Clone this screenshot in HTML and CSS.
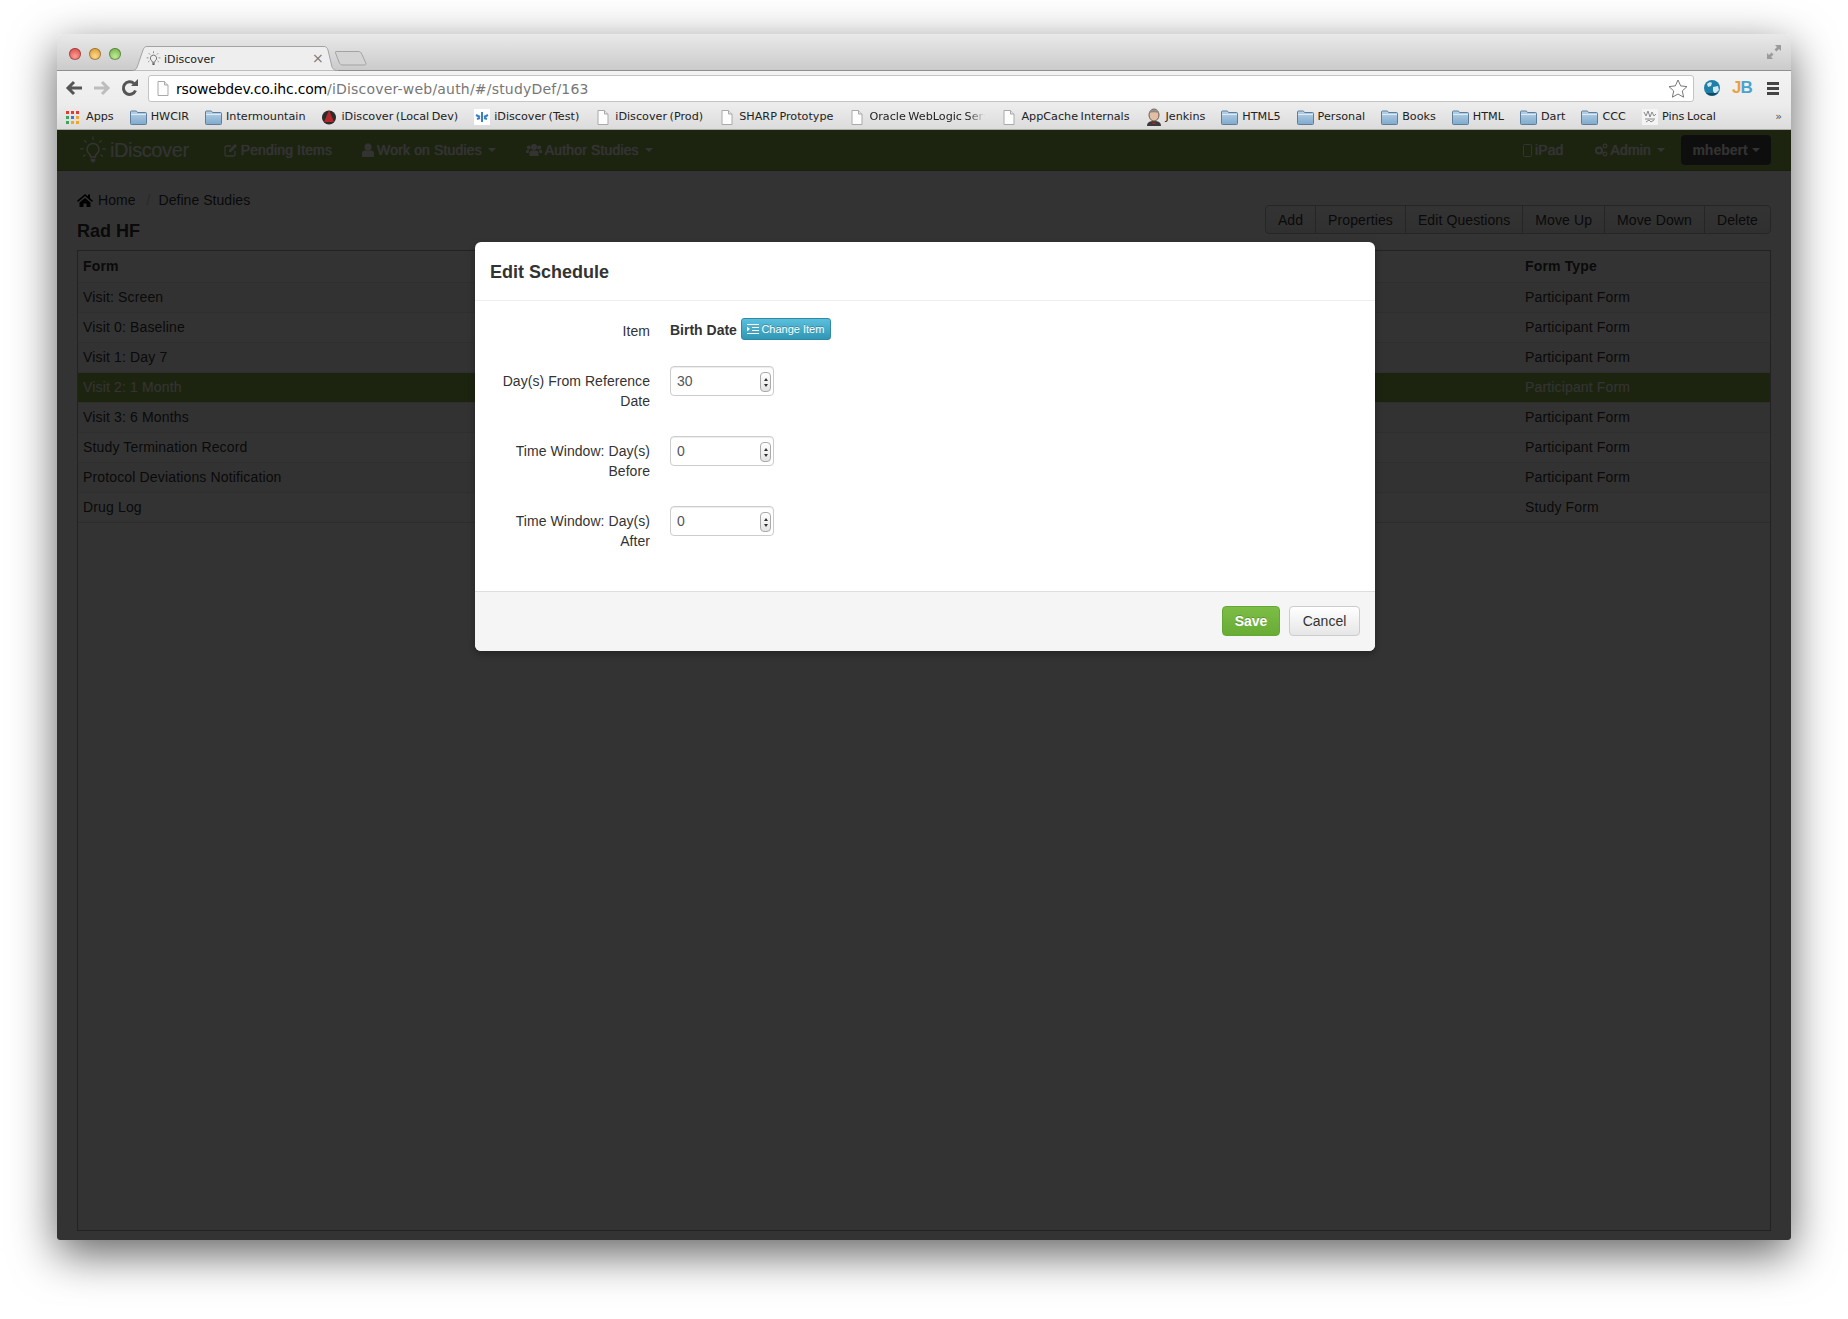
FILE: index.html
```html
<!DOCTYPE html>
<html>
<head>
    <title>iDiscover</title>
    <link rel="stylesheet" href="styles.css">
</head>
<body>
    <svg class="defs" width="0" height="0">
        <defs>
            <linearGradient id="folderFill" x1="0" y1="0" x2="0" y2="1">
                <stop offset="0" stop-color="#b9d3e8"/>
                <stop offset="1" stop-color="#7fa9cb"/>
            </linearGradient>
            <symbol id="folder" viewBox="0 0 17 15">
                <path d="M.5 13.500V2q0-1 1-1h4.500q.8 0 1.200 1l.3.500h8q1 0 1 1v10q0 1-1 1h-14q-1 0-1-1z" fill="url(#folderFill)" stroke="#5d7f9c"/>
                <path d="M1 4.500h15" stroke="#dcebf6"/>
            </symbol>
            <symbol id="page" viewBox="0 0 12 15">
                <path d="M1 .5h6.500L11 4v10.500H1z" fill="#fdfdfd" stroke="#a9a9a9"/>
                <path d="M7.500.5V4H11" fill="#e6e6e6" stroke="#a9a9a9"/>
            </symbol>
            <symbol id="bulb" viewBox="0 0 24 24">
                <path d="M12 6.500a5 5 0 0 0-3 9c.8.7 1 1.500 1 2.500h4c0-1 .2-1.800 1-2.500a5 5 0 0 0-3-9z" fill="none" stroke="currentColor" stroke-width="1.300"/>
                <path d="M10 19.500h4v1.500l-1 1.500h-2l-1-1.500z" fill="currentColor"/>
                <path d="M12 .5v3M4.500 3.500l2 2.200M19.500 3.500l-2 2.200M1 11h3M20 11h3M3.500 17.500l2-1.500M20.500 17.500l-2-1.500" stroke="currentColor" fill="none"/>
            </symbol>
        </defs>
    </svg>

    <div class="window">
        <!-- tab strip -->
        <div class="tabstrip">
            <div class="lights">
                <span class="light red"></span>
                <span class="light amber"></span>
                <span class="light green"></span>
            </div>
            <div class="tab">
                <svg class="tab-shape" width="206" height="25" viewBox="0 0 206 25">
                    <path d="M0 24.500c3 0 4-1 5-3L11 4c1-2.500 2-3.500 4-3.500h177c2 0 3 1 4 3.500l4 17c1 2 2 3.500 6 3.500" fill="#eeeeee" stroke="#a3a3a3"/>
                </svg>
                <svg class="tab-icon" width="15" height="15"><use href="#bulb"/></svg>
                <span class="tab-title">iDiscover</span>
                <span class="tab-close">×</span>
            </div>
            <svg class="newtab" width="33" height="16" viewBox="0 0 33 16">
                <path d="M2 1.500h22c2 0 3 .5 4 3l4 9c.3 1-.5 1.500-1.500 1.500H9c-2 0-3-.5-4-3L1.500 3c-.3-1 0-1.500.5-1.500z" fill="#d4d4d4" stroke="#a3a3a3"/>
            </svg>
            <svg class="expand" width="14" height="14" viewBox="0 0 14 14">
                <path d="M8 0h6v6l-2-2-2.500 2.500-2-2L10 2zM0 8l2 2 2.500-2.500 2 2L4 12l2 2H0z" fill="#9b9b9b"/>
            </svg>
        </div>

        <!-- address bar -->
        <div class="toolbar">
            <svg class="nav-arrow" width="18" height="16" viewBox="0 0 18 16"><path d="M17 8H4M9 2 3 8l6 6" fill="none" stroke="#555" stroke-width="3"/></svg>
            <svg class="nav-arrow" width="18" height="16" viewBox="0 0 18 16"><path d="M1 8h13M9 2l6 6-6 6" fill="none" stroke="#bdbdbd" stroke-width="3"/></svg>
            <svg class="nav-arrow" width="18" height="18" viewBox="0 0 18 18"><path d="M14.500 11.500A6.300 6.300 0 1 1 13 4.500" fill="none" stroke="#555" stroke-width="3"/><path d="M10 7h7V0z" fill="#555"/></svg>
            <div class="urlbar">
                <svg class="url-page" width="12" height="15"><use href="#page"/></svg>
                <span class="url"><span class="url-host">rsowebdev.co.ihc.com</span>/iDiscover-web/auth/#/studyDef/163</span>
                <svg class="star" width="20" height="19" viewBox="0 0 20 19"><path d="m10 1 2.700 5.900 6.300.7-4.700 4.300 1.300 6.300L10 15l-5.600 3.200 1.300-6.300L1 7.600l6.300-.7z" fill="#fff" stroke="#777"/></svg>
            </div>
            <svg class="ext-globe" width="16" height="16" viewBox="0 0 16 16"><circle cx="8" cy="8" r="8" fill="#1f7fa8"/><path d="M3 4c2-2 4-2 5-1L7 6 4 7zM9 7l5-1 1 4-4 4-2-3z" fill="#d4e6ee"/><path d="M2 13a8 8 0 0 0 12 0z" fill="#124a63"/></svg>
            <span class="ext-jb"><span class="ext-j">J</span><span class="ext-b">B</span></span>
            <div class="menu-icon"><i></i><i></i><i></i></div>
        </div>

        <!-- bookmarks -->
        <div class="bookmarks">
            <a class="bm bm-apps"><span class="apps-grid"><i class="r"></i><i class="r"></i><i class="r"></i><i class="g"></i><i class="b"></i><i class="o"></i><i class="g"></i><i class="o"></i><i class="o"></i></span>Apps</a>
            <a class="bm"><svg width="17" height="15"><use href="#folder"/></svg>HWCIR</a>
            <a class="bm"><svg width="17" height="15"><use href="#folder"/></svg>Intermountain</a>
            <a class="bm"><svg width="16" height="16" viewBox="0 0 16 16"><circle cx="8" cy="8.500" r="7" fill="#2b2b2b"/><path d="M8 1 13 13H3z" fill="#b3262a"/></svg>iDiscover (Local Dev)</a>
            <a class="bm"><svg width="16" height="16" viewBox="0 0 16 16"><rect width="16" height="16" fill="#fff"/><path d="M8 3v10M2 6l4 2M14 6l-4 2M3 10l3-1M13 10l-3-1" stroke="#3b7fc0" stroke-width="2"/></svg>iDiscover (Test)</a>
            <a class="bm"><svg width="16" height="15"><use href="#page"/></svg>iDiscover (Prod)</a>
            <a class="bm"><svg width="16" height="15"><use href="#page"/></svg>SHARP Prototype</a>
            <a class="bm bm-fade"><svg width="16" height="15"><use href="#page"/></svg><span class="bm-fade-text">Oracle WebLogic Server</span></a>
            <a class="bm"><svg width="16" height="15"><use href="#page"/></svg>AppCache Internals</a>
            <a class="bm"><svg width="16" height="18" viewBox="0 0 16 18"><path d="M1 18c0-4 3-5 7-5s7 1 7 5z" fill="#3a3a3a"/><ellipse cx="8" cy="7" rx="5" ry="6" fill="#e2bfa3" stroke="#6b5a50"/><path d="M3 5c1-4 9-4 10 0-3-1-7-1-10 0z" fill="#888"/><path d="M6.500 14 8 15l1.500-1v2.500L8 15.500l-1.500 1z" fill="#b0242a"/></svg>Jenkins</a>
            <a class="bm"><svg width="17" height="15"><use href="#folder"/></svg>HTML5</a>
            <a class="bm"><svg width="17" height="15"><use href="#folder"/></svg>Personal</a>
            <a class="bm"><svg width="17" height="15"><use href="#folder"/></svg>Books</a>
            <a class="bm"><svg width="17" height="15"><use href="#folder"/></svg>HTML</a>
            <a class="bm"><svg width="17" height="15"><use href="#folder"/></svg>Dart</a>
            <a class="bm"><svg width="17" height="15"><use href="#folder"/></svg>CCC</a>
            <a class="bm"><svg width="16" height="16" viewBox="0 0 16 16"><rect width="16" height="16" fill="#f4f4f4"/><path d="M2 3l2 4 2-5 2 6 2-5 2 4 2-2M3 10h10M4 13l3-2 2 2 3-2" stroke="#8a8a8a" fill="none"/></svg>Pins Local</a>
            <span class="bm-more">»</span>
        </div>

        <!-- the page itself -->
        <div class="app">
            <nav class="navbar">
                <a class="brand"><svg width="28" height="28"><use href="#bulb"/></svg>iDiscover</a>
                <a class="nav-link">
                    <svg width="14" height="14" viewBox="0 0 14 14"><path d="M11 8v3.500q0 1.500-1.500 1.500h-7Q1 13 1 11.500v-7Q1 3 2.500 3H7" fill="none" stroke="currentColor" stroke-width="1.300"/><path d="M5 7 11 1l2 2-6 6H5z" fill="currentColor"/></svg>
                    Pending Items
                </a>
                <a class="nav-link">
                    <svg width="12" height="14" viewBox="0 0 12 14"><circle cx="6" cy="4" r="3.500" fill="currentColor"/><path d="M0 13V10q0-2.500 3-2.500h6q3 0 3 2.500v3q0 1-1 1H1q-1 0-1-1z" fill="currentColor"/></svg>
                    Work on Studies <b class="caret"></b>
                </a>
                <a class="nav-link">
                    <svg width="16" height="14" viewBox="0 0 16 14"><circle cx="8" cy="4" r="3" fill="currentColor"/><circle cx="2.800" cy="4.500" r="2" fill="currentColor"/><circle cx="13.200" cy="4.500" r="2" fill="currentColor"/><path d="M3.500 13V10q0-2.500 2.500-2.500h4q2.500 0 2.500 2.500v3zM0 10V8q0-1 1-1h2L2.500 10zM16 10V8q0-1-1-1h-2l.5 3z" fill="currentColor"/></svg>
                    Author Studies <b class="caret"></b>
                </a>
                <div class="nav-right">
                    <a class="nav-link">
                        <svg width="9" height="13" viewBox="0 0 9 13"><rect x=".5" y=".5" width="8" height="12" rx="1" fill="none" stroke="currentColor"/></svg>
                        iPad
                    </a>
                    <a class="nav-link">
                        <svg width="14" height="14" viewBox="0 0 14 14"><circle cx="5" cy="7.500" r="3" fill="none" stroke="currentColor" stroke-width="2"/><circle cx="11" cy="3" r="1.800" fill="none" stroke="currentColor" stroke-width="1.300"/><circle cx="11" cy="11" r="1.800" fill="none" stroke="currentColor" stroke-width="1.300"/></svg>
                        Admin <b class="caret"></b>
                    </a>
                    <a class="user-btn">mhebert <b class="caret"></b></a>
                </div>
            </nav>

            <main class="content">
                <div class="breadcrumb">
                    <svg width="16" height="14" viewBox="0 0 16 14"><path d="M8 1 0 7.800l1 1.100 7-6 7 6 1-1.100-3-2.600V1.500h-2v2zM2.500 9.500 8 5l5.500 4.500V14H9.500v-3.500h-3V14h-4z" fill="currentColor"/></svg>
                    <a>Home</a><span class="divider">/</span><a>Define Studies</a>
                </div>
                <div class="title-row">
                    <h2>Rad HF</h2>
                    <div class="btn-group">
                        <button>Add</button>
                        <button>Properties</button>
                        <button>Edit Questions</button>
                        <button>Move Up</button>
                        <button>Move Down</button>
                        <button>Delete</button>
                    </div>
                </div>
                <div class="table-box">
                    <table>
                        <thead>
                            <tr><th>Form</th><th class="col-type">Form Type</th></tr>
                        </thead>
                        <tbody>
                            <tr><td>Visit: Screen</td><td>Participant Form</td></tr>
                            <tr><td>Visit 0: Baseline</td><td>Participant Form</td></tr>
                            <tr><td>Visit 1: Day 7</td><td>Participant Form</td></tr>
                            <tr class="selected"><td>Visit 2: 1 Month</td><td>Participant Form</td></tr>
                            <tr><td>Visit 3: 6 Months</td><td>Participant Form</td></tr>
                            <tr><td>Study Termination Record</td><td>Participant Form</td></tr>
                            <tr><td>Protocol Deviations Notification</td><td>Participant Form</td></tr>
                            <tr><td>Drug Log</td><td>Study Form</td></tr>
                        </tbody>
                    </table>
                </div>
            </main>

            <div class="backdrop"></div>

            <div class="modal">
                <div class="modal-header">
                    <h3>Edit Schedule</h3>
                </div>
                <div class="modal-body">
                    <div class="form-row item-row">
                        <label>Item</label>
                        <div class="controls">
                            <strong>Birth Date</strong>
                            <button class="btn-info">
                                <svg width="12" height="10" viewBox="0 0 12 10"><path d="M0 .5h12M5 3.500h7M5 6.500h7M0 9.500h12" stroke="#fff" fill="none"/><path d="M0 2.500 3 5 0 7.500z" fill="#fff"/></svg>
                                Change Item
                            </button>
                        </div>
                    </div>
                    <div class="form-row">
                        <label>Day(s) From Reference Date</label>
                        <div class="number-input"><input type="text" value="30"><span class="spinner"><i class="up"></i><i class="down"></i></span></div>
                    </div>
                    <div class="form-row">
                        <label>Time Window: Day(s) Before</label>
                        <div class="number-input"><input type="text" value="0"><span class="spinner"><i class="up"></i><i class="down"></i></span></div>
                    </div>
                    <div class="form-row">
                        <label>Time Window: Day(s) After</label>
                        <div class="number-input"><input type="text" value="0"><span class="spinner"><i class="up"></i><i class="down"></i></span></div>
                    </div>
                </div>
                <div class="modal-footer">
                    <button class="btn-save">Save</button>
                    <button class="btn-cancel">Cancel</button>
                </div>
            </div>
        </div>
    </div>
</body>
</html>
```

FILE: styles.css
```css
html,
body {
    height: 100%;
}

body {
    margin: 0;
    padding: 34px 57px 0;
    box-sizing: border-box;
    height: 1319px;
    overflow: hidden;
    background-color: #fff;
    font-family: "Liberation Sans", Arial, sans-serif;
    font-size: 14px;
    line-height: 20px;
    color: #333;
}

.defs {
    position: absolute;
}

.window {
    width: 1734px;
    height: 1206px;
    display: flex;
    flex-direction: column;
    border-radius: 5px 5px 3px 3px;
    box-shadow: 0 14px 45px rgba(0, 0, 0, 0.62);
    overflow: hidden;
}

/* browser chrome */
.tabstrip {
    position: relative;
    height: 37px;
    flex: none;
    display: flex;
    align-items: flex-end;
    box-sizing: border-box;
    background: linear-gradient(#e9e9e9, #cbcbcb);
    border-bottom: 1px solid #8f8f8f;
}

.lights {
    display: flex;
    gap: 8px;
    align-self: flex-start;
    margin: 14px 0 0 12px;
}

.light {
    width: 12px;
    height: 12px;
    border-radius: 50%;
    box-shadow: inset 0 0 0 1px rgba(0, 0, 0, 0.3);
}

.red {
    background: radial-gradient(circle at 50% 70%, #ff9d96, #d63a34);
}

.amber {
    background: radial-gradient(circle at 50% 70%, #ffd98a, #d28e22);
}

.green {
    background: radial-gradient(circle at 50% 70%, #c1eb96, #63a83a);
}

.tab {
    position: relative;
    width: 206px;
    height: 25px;
    margin: 0 0 -1px 11px;
    display: flex;
    align-items: center;
    font-family: "DejaVu Sans", sans-serif;
    font-size: 11px;
    color: #222;
}

.tab-shape {
    position: absolute;
    left: 0;
    top: 0;
}

.tab-icon {
    position: relative;
    margin-left: 14px;
    color: #555;
}

.tab-title {
    position: relative;
    margin: 2px 0 0 3px;
}

.tab-close {
    position: absolute;
    left: 180px;
    top: 2px;
    font-size: 14px;
    color: #777;
}

.newtab {
    margin: 0 0 4px -4px;
}

.expand {
    position: absolute;
    right: 10px;
    top: 11px;
}

.toolbar {
    height: 34px;
    flex: none;
    display: flex;
    align-items: center;
    box-sizing: border-box;
    padding-left: 8px;
    background: linear-gradient(#f3f3f3, #ececec);
}

.nav-arrow {
    margin-right: 10px;
}

.urlbar {
    width: 1546px;
    height: 27px;
    margin-left: -1px;
    display: flex;
    align-items: center;
    box-sizing: border-box;
    padding: 0 5px 0 8px;
    background-color: #fff;
    border: 1px solid #c4c4c4;
    border-radius: 3px;
}

.url-page {
    flex: none;
}

.url {
    margin: 1px 0 0 7px;
    font-family: "DejaVu Sans", sans-serif;
    font-size: 14px;
    letter-spacing: 0.2px;
    color: #777;
    white-space: nowrap;
}

.url-host {
    letter-spacing: -0.2px;
    color: #000;
}

.star {
    margin-left: auto;
}

.ext-globe {
    margin-left: 10px;
}

.ext-jb {
    width: 20px;
    margin-left: 12px;
    font-size: 17px;
    font-weight: bold;
    letter-spacing: -1px;
}

.ext-j {
    color: #e9a33a;
}

.ext-b {
    color: #4aa3cf;
}

.menu-icon {
    width: 12px;
    margin-left: 15px;
}

.menu-icon i {
    display: block;
    height: 3px;
    margin: 2px 0;
    background-color: #444;
}

.bookmarks {
    height: 25px;
    flex: none;
    display: flex;
    align-items: center;
    gap: 16px;
    box-sizing: border-box;
    padding: 0 0 0 9px;
    background: linear-gradient(#ececec, #dcdcdc);
    border-bottom: 1px solid #a9a9a9;
    font-family: "DejaVu Sans", sans-serif;
    font-size: 11.2px;
    word-spacing: -1px;
    color: #222;
    white-space: nowrap;
}

.bm {
    display: flex;
    align-items: center;
    gap: 4px;
}

.apps-grid {
    width: 13px;
    display: grid;
    grid-template-columns: repeat(3, 3px);
    gap: 2px;
    margin-right: 3px;
}

.apps-grid i {
    height: 3px;
}

.apps-grid .r {
    background-color: #e33b2e;
}

.apps-grid .o {
    background-color: #f4a622;
}

.apps-grid .g {
    background-color: #3aa757;
}

.apps-grid .b {
    background-color: #3b78e7;
}

.bm-fade-text {
    width: 116px;
    overflow: hidden;
    -webkit-mask-image: linear-gradient(90deg, #000 85%, transparent);
    mask-image: linear-gradient(90deg, #000 85%, transparent);
}

.bm-more {
    margin-left: auto;
    margin-right: 9px;
    color: #555;
}

/* app under the modal */
.app {
    position: relative;
    flex: 1;
    min-height: 0;
    display: flex;
    flex-direction: column;
    background-color: #fff;
}

.navbar {
    height: 41px;
    flex: none;
    display: flex;
    align-items: center;
    box-sizing: border-box;
    padding: 0 20px;
    background-color: #8cb450;
    border-bottom: 1px solid #7a9c45;
    color: #fff;
}

.navbar a {
    color: #fff;
}

.brand {
    display: flex;
    align-items: center;
    gap: 3px;
    margin: 0 20px 0 2px;
    font-size: 20px;
    letter-spacing: -0.4px;
}

.nav-link {
    display: flex;
    align-items: center;
    gap: 3px;
    padding: 0 15px;
    letter-spacing: 0.15px;
    text-shadow: 0 0 1px #fff;
    white-space: nowrap;
}

.caret {
    display: inline-block;
    margin-left: 3px;
    border-top: 4px solid #fff;
    border-left: 4px solid transparent;
    border-right: 4px solid transparent;
}

.nav-right {
    margin-left: auto;
    display: flex;
    align-items: center;
}

.user-btn {
    width: 90px;
    height: 30px;
    display: flex;
    align-items: center;
    justify-content: center;
    margin-left: 1px;
    gap: 1px;
    box-sizing: border-box;
    background-color: #484848;
    border-radius: 4px;
    font-weight: bold;
}

.content {
    flex: 1;
    min-height: 0;
    display: flex;
    flex-direction: column;
    padding: 19px 20px 9px;
}

.breadcrumb {
    display: flex;
    align-items: center;
    height: 20px;
    color: #000;
    letter-spacing: 0.05px;
}

.breadcrumb a {
    margin-left: 5px;
    color: #333;
}

.divider {
    margin: 0 8px 0 11px;
    color: #ccc;
}

.divider + a {
    margin-left: 0;
}

.title-row {
    height: 40px;
    display: flex;
    justify-content: space-between;
    align-items: flex-start;
}

h2 {
    margin: 11px 0 0;
    font-size: 18px;
    line-height: 20px;
}

.btn-group {
    display: flex;
    margin-top: -5px;
}

.btn-group button {
    height: 29px;
    padding: 0 12px;
    margin-left: -1px;
    background: linear-gradient(#fff, #eee);
    border: 1px solid #bbb;
    color: #333;
    font-family: inherit;
    font-size: 14px;
    letter-spacing: 0.1px;
}

.btn-group button:first-child {
    border-radius: 4px 0 0 4px;
}

.btn-group button:last-child {
    border-radius: 0 4px 4px 0;
}

.table-box {
    flex: 1;
    border: 1px solid #aaa;
}

table {
    width: 100%;
    border-collapse: collapse;
    table-layout: fixed;
}

th,
td {
    padding: 5px;
    line-height: 19px;
    text-align: left;
    border-top: 1px solid #e8e8e8;
    letter-spacing: 0.15px;
}

th {
    padding-top: 6px;
    padding-bottom: 6px;
    border-top: none;
}

.col-type {
    width: 240px;
}

tbody tr:nth-child(odd) td {
    background-color: #f9f9f9;
}

tbody tr:last-child td {
    border-bottom: 1px solid #ddd;
}

tbody tr.selected td {
    background-color: #8cb450;
    color: #fff;
}

.backdrop {
    position: absolute;
    inset: 0;
    background-color: rgba(0, 0, 0, 0.8);
}

/* modal */
.modal {
    position: absolute;
    top: 112px;
    left: 50%;
    width: 900px;
    margin-left: -449px;
    box-sizing: border-box;
    background-color: #fff;
    border-radius: 6px;
    box-shadow: 0 3px 7px rgba(0, 0, 0, 0.3);
    overflow: hidden;
}

.modal-header {
    height: 59px;
    display: flex;
    align-items: center;
    box-sizing: border-box;
    padding: 2px 15px 0;
    border-bottom: 1px solid #eee;
}

h3 {
    margin: 0;
    font-size: 18px;
    line-height: 30px;
}

.modal-body {
    padding: 17px 15px 15px;
}

.form-row {
    display: flex;
    gap: 20px;
    margin-bottom: 25px;
}

.item-row {
    height: 22px;
    margin-bottom: 26px;
}

.form-row label {
    width: 160px;
    flex: none;
    box-sizing: border-box;
    padding-top: 5px;
    text-align: right;
    letter-spacing: 0.05px;
}

.item-row label {
    padding-top: 3px;
}

.controls {
    display: flex;
    align-items: center;
    gap: 4px;
}

.controls strong {
    margin-top: 2px;
}

.btn-info {
    width: 90px;
    height: 22px;
    display: flex;
    align-items: center;
    justify-content: center;
    gap: 2px;
    padding: 0;
    background: linear-gradient(#5bc0de, #2f96b4);
    border: 1px solid #2f8aa6;
    border-radius: 3px;
    color: #fff;
    font-family: inherit;
    font-size: 11px;
    text-shadow: 0 -1px 0 rgba(0, 0, 0, 0.25);
}

.number-input {
    position: relative;
    height: 30px;
}

.number-input input {
    width: 104px;
    height: 30px;
    box-sizing: border-box;
    padding: 0 6px;
    background-color: #fff;
    border: 1px solid #ccc;
    border-radius: 4px;
    box-shadow: inset 0 1px 1px rgba(0, 0, 0, 0.075);
    color: #555;
    font-family: inherit;
    font-size: 14px;
}

.spinner {
    position: absolute;
    left: 90px;
    top: 6px;
    width: 9px;
    height: 18px;
    display: flex;
    flex-direction: column;
    align-items: center;
    justify-content: center;
    gap: 3px;
    background: linear-gradient(#fff, #e3e3e3);
    border: 1px solid #aaa;
    border-radius: 4px;
}

.spinner i {
    border-left: 2.500px solid transparent;
    border-right: 2.500px solid transparent;
}

.spinner .up {
    border-bottom: 3px solid #333;
}

.spinner .down {
    border-top: 3px solid #333;
}

.modal-footer {
    display: flex;
    justify-content: flex-end;
    gap: 9px;
    padding: 14px 15px 15px;
    background-color: #f5f5f5;
    border-top: 1px solid #ddd;
}

.modal-footer button {
    height: 30px;
    padding: 0;
    border-radius: 4px;
    font-family: inherit;
    font-size: 14px;
}

.btn-save {
    width: 58px;
    background: linear-gradient(#7cbd45, #68ac36);
    border: 1px solid #66a636;
    color: #fff;
    font-weight: bold;
    text-shadow: 0 -1px 0 rgba(0, 0, 0, 0.2);
}

.btn-cancel {
    width: 71px;
    background: linear-gradient(#fff, #e6e6e6);
    border: 1px solid #ccc;
    color: #333;
}
```
